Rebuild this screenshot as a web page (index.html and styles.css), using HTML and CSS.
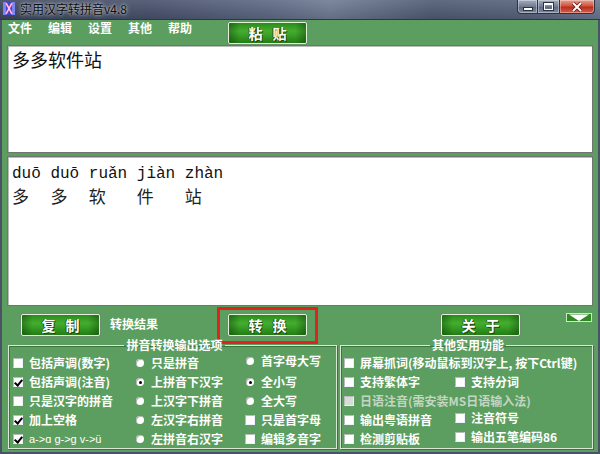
FILE: index.html
```html
<!DOCTYPE html>
<html lang="zh-CN">
<head>
<meta charset="utf-8">
<title>实用汉字转拼音v4.8</title>
<link rel="stylesheet" href="styles.css">
</head>
<body>
<div class="win">
  <header class="titlebar">
    <svg class="appicon" width="12" height="13" viewBox="0 0 12 13">
      <rect x="0" y="0" width="12" height="13" fill="#3a48c8"/>
      <rect x="0" y="0" width="3" height="13" fill="#7a86f0"/>
      <rect x="9" y="0" width="3" height="13" fill="#7a86f0"/>
      <path d="M3 1 L9 12 M9 1 L3 12" stroke="#ff6fc0" stroke-width="2"/>
      <path d="M3 1 L9 12 M9 1 L3 12" stroke="#fff" stroke-width="0.7"/>
    </svg>
    <span class="title">实用汉字转拼音v4.8</span>
    <div class="caps">
      <span class="cap cap-min"><svg width="10" height="4" viewBox="0 0 10 4"><rect x="0.5" y="0.5" width="9" height="3" fill="#fff" stroke="#2a3140" stroke-width="1"/></svg></span>
      <span class="cap cap-max"><svg width="11" height="9" viewBox="0 0 11 9"><rect x="0.5" y="0.5" width="10" height="8" fill="none" stroke="#2a3140" stroke-width="1"/><rect x="1.5" y="1.5" width="8" height="6" fill="none" stroke="#fff" stroke-width="1"/><rect x="1.5" y="1.5" width="8" height="1.6" fill="#fff"/></svg></span>
      <span class="cap cap-close"><svg width="12" height="10" viewBox="0 0 12 10"><path d="M2 1 L10 9 M10 1 L2 9" stroke="#5a1010" stroke-width="3.4"/><path d="M2 1 L10 9 M10 1 L2 9" stroke="#fff" stroke-width="2"/></svg></span>
    </div>
  </header>

  <main class="client">
    <div class="topbar">
      <nav class="menu">
        <span>文件</span><span>编辑</span><span>设置</span><span>其他</span><span>帮助</span>
      </nav>
      <button class="gbtn btn-paste">粘贴</button>
    </div>

    <div class="edit edit-src">多多软件站</div>

    <div class="edit edit-out">
      <div class="syls">
        <div class="syl w4"><span class="py">duō</span><span class="hz">多</span></div>
        <div class="syl w4"><span class="py">duō</span><span class="hz">多</span></div>
        <div class="syl w5"><span class="py">ruǎn</span><span class="hz">软</span></div>
        <div class="syl w5"><span class="py">jiàn</span><span class="hz">件</span></div>
        <div class="syl"><span class="py">zhàn</span><span class="hz">站</span></div>
      </div>
    </div>

    <div class="actions">
      <button class="gbtn btn-copy">复制</button>
      <span class="result-label">转换结果</span>
      <div class="highlight"><button class="gbtn btn-convert">转换</button></div>
      <button class="gbtn btn-about">关于</button>
      <span class="more"><svg width="26" height="9" viewBox="0 0 26 9"><rect x="0" y="0" width="26" height="9" fill="#2f8a22"/><rect x="0.5" y="0.5" width="25" height="8" fill="none" stroke="#cfe6c8"/><path d="M3 1.5 H23 L13 8 Z" fill="#fff"/></svg></span>
    </div>

    <div class="groups">
      <fieldset class="group group-left">
        <legend>拼音转换输出选项</legend>
        <div class="grid3">
          <label class="opt"><i class="cb"></i>包括声调(数字)</label>
          <label class="opt"><i class="rb"></i>只是拼音</label>
          <label class="opt up"><i class="rb"></i>首字母大写</label>

          <label class="opt"><i class="cb on"></i>包括声调(注音)</label>
          <label class="opt"><i class="rb on"></i>上拼音下汉字</label>
          <label class="opt"><i class="rb on"></i>全小写</label>

          <label class="opt"><i class="cb"></i>只是汉字的拼音</label>
          <label class="opt"><i class="rb"></i>上汉字下拼音</label>
          <label class="opt"><i class="rb"></i>全大写</label>

          <label class="opt"><i class="cb on"></i>加上空格</label>
          <label class="opt"><i class="rb"></i>左汉字右拼音</label>
          <label class="opt"><i class="cb"></i>只是首字母</label>

          <label class="opt"><i class="cb on"></i><span class="latin">a-&gt;ɑ ɡ-&gt;g v-&gt;ü</span></label>
          <label class="opt"><i class="rb"></i>左拼音右汉字</label>
          <label class="opt"><i class="cb"></i>编辑多音字</label>
        </div>
      </fieldset>

      <fieldset class="group group-right">
        <legend>其他实用功能</legend>
        <div class="grid2">
          <label class="opt span2"><i class="cb"></i>屏幕抓词(移动鼠标到汉字上, 按下Ctrl键)</label>
          <label class="opt"><i class="cb"></i>支持繁体字</label>
          <label class="opt"><i class="cb"></i>支持分词</label>
          <label class="opt span2 disabled"><i class="cb"></i>日语注音(需安装MS日语输入法)</label>
          <label class="opt"><i class="cb"></i>输出粤语拼音</label>
          <label class="opt up"><i class="cb"></i>注音符号</label>
          <label class="opt"><i class="cb"></i>检测剪贴板</label>
          <label class="opt up"><i class="cb"></i>输出五笔编码86</label>
        </div>
      </fieldset>
    </div>
  </main>
</div>
</body>
</html>
```

FILE: styles.css
```css
* { box-sizing: border-box; margin: 0; padding: 0; }

html, body {
  width: 600px;
  height: 454px;
  overflow: hidden;
  background: #fff;
}

body {
  font-family: "Noto Sans CJK SC", "Liberation Sans", sans-serif;
  font-size: 12px;
}

.win {
  width: 600px;
  height: 454px;
  display: flex;
  flex-direction: column;
}

/* ---------- title bar ---------- */
.titlebar {
  height: 20px;
  flex: none;
  display: flex;
  align-items: flex-start;
  padding-left: 3px;
  background:
    linear-gradient(180deg, rgba(255,255,255,0.10), rgba(0,0,0,0.10)),
    linear-gradient(90deg, #3c465d 0%, #46506a 25%, #5d6882 45%, #6f7a93 55%, #4e5972 72%, #56617a 88%, #6a7590 100%);
  border-bottom: 1px solid #2f3646;
}

.appicon { margin-top: 2px; flex: none; }

.title {
  margin-left: 5px;
  margin-top: 1px;
  font-size: 12px;
  line-height: 16px;
  color: #0c0c0c;
  text-shadow: 0 0 5px rgba(255,255,255,0.75), 0 0 2px rgba(255,255,255,0.6);
}

.caps {
  margin-left: auto;
  margin-right: 5px;
  display: flex;
  height: 14px;
}

.cap {
  height: 14px;
  display: flex;
  align-items: center;
  justify-content: center;
  border: 1px solid #2c3342;
  border-top: none;
  box-shadow: inset 0 0 0 1px rgba(255,255,255,0.35);
}

.cap-min {
  width: 21px;
  border-radius: 0 0 0 4px;
  background: linear-gradient(180deg, #a4adbf, #707b92 50%, #5b6780 51%, #7f8aa2);
}
.cap-min svg { margin-top: 5px; }

.cap-max {
  width: 22px;
  border-left: none;
  background: linear-gradient(180deg, #a4adbf, #707b92 50%, #5b6780 51%, #7f8aa2);
}

.cap-close {
  width: 35px;
  border-left: none;
  border-radius: 0 0 4px 0;
  background: linear-gradient(180deg, #e8a090, #d0553f 45%, #b92e1c 55%, #d4604a);
}

/* ---------- client area ---------- */
.client {
  flex: 1;
  display: flex;
  flex-direction: column;
  background: #5c9e60;
  border-left: 2px solid #4a5266;
  border-right: 2px solid #4a5266;
  border-bottom: 2px solid #4a5266;
  padding: 0 5px;
}

.topbar {
  height: 25px;
  flex: none;
  display: flex;
  align-items: flex-start;
}

.menu {
  display: flex;
  gap: 16px;
  padding-left: 1px;
  margin-top: 1px;
  font-size: 12px;
  line-height: 14px;
  font-weight: 700;
  color: #fff;
}

/* green buttons */
.gbtn {
  height: 22px;
  width: 79px;
  border: 1px solid #e2f0dc;
  border-radius: 2px;
  background:
    linear-gradient(90deg, rgba(0,40,0,0.35), rgba(0,0,0,0) 14%, rgba(0,0,0,0) 86%, rgba(0,40,0,0.35)),
    linear-gradient(180deg, #2c8a1c 0%, #44ad2e 40%, #3aa026 60%, #237c14 100%);
  box-shadow: 0 0 0 1px #6d8f6d;
  color: #fff;
  font-family: "Noto Sans CJK SC", sans-serif;
  font-size: 14px;
  font-weight: 700;
  line-height: 18px;
  letter-spacing: 10px;
  text-indent: 10px;
  text-shadow: 1px 1px 0 #1a4a10, -1px 0 0 #1a5a12;
  cursor: default;
}

.btn-paste { margin-left: 36px; margin-top: 2px; }

/* edit boxes */
.edit {
  flex: none;
  background: #fff;
  border: 1px solid #6f766f;
  box-shadow: inset 1px 1px 0 #b9bdb9;
}

.edit-src {
  height: 108px;
  padding: 2px 4px;
  font-size: 18px;
  line-height: 22px;
  color: #111;
}

.edit-out {
  margin-top: 3px;
  height: 150px;
  padding: 8px 4px;
}

.syls { display: flex; }
.syl { display: flex; flex-direction: column; }
.syl.w4 { width: 38.4px; }
.syl.w5 { width: 48px; }

.py {
  font-family: "Liberation Mono", "DejaVu Sans Mono", monospace;
  font-size: 16px;
  line-height: 18px;
  color: #111;
}

.hz {
  margin-top: 3px;
  font-size: 17px;
  line-height: 20px;
  color: #222;
}

/* action row */
.actions {
  height: 37px;
  flex: none;
  display: flex;
  align-items: flex-start;
}

.btn-copy { margin-left: 14px; margin-top: 8px; }

.result-label {
  margin-left: 10px;
  margin-top: 10px;
  color: #fff;
  font-weight: 700;
  font-size: 12px;
  line-height: 16px;
}

.highlight {
  margin-left: 59px;
  margin-top: 1px;
  border: 3px solid #e3221f;
  padding: 4px 8px 5px;
}

.btn-about { margin-left: 123px; margin-top: 8px; }

.more { margin-left: 46px; margin-top: 7px; display: flex; }

/* group boxes */
.groups {
  flex: 1;
  display: flex;
  gap: 3px;
  padding-left: 1px;
}

.group {
  border: 1px solid #d9e9d6;
  box-shadow: inset 1px 1px 0 #3f7442, 1px 1px 0 #3f7442;
  margin-top: -5px;
  height: 111px;
}

.group legend {
  margin: 0 auto;
  padding: 0 2px;
  color: #fff;
  font-weight: 700;
  font-size: 12px;
  line-height: 14px;
}

.group-left { width: 329px; padding: 1px 0 0 4px; }
.group-right { width: 253px; padding: 1px 0 0 3px; }

.grid3 {
  display: grid;
  grid-template-columns: 122px 110px 1fr;
  grid-auto-rows: 19px;
}

.grid2 {
  display: grid;
  grid-template-columns: 111px 1fr;
  grid-auto-rows: 19px;
}

.span2 { grid-column: span 2; }

.opt {
  display: flex;
  align-items: center;
  gap: 6px;
  color: #fff;
  font-weight: 700;
  font-size: 12px;
  line-height: 14px;
  white-space: nowrap;
}

.opt.up { margin-top: -3px; }

.opt.disabled { color: #c3d6c2; }
.opt.disabled .cb { background: #d8dcd8; }

.latin {
  font-family: "Liberation Sans", sans-serif;
  font-size: 11px;
  font-weight: 400;
}

.cb {
  position: relative;
  flex: none;
  width: 10px;
  height: 10px;
  background: #fff;
  border: 1px solid #b8bcb8;
  border-right-color: #eef;
  border-bottom-color: #eef;
}

.cb.on::after {
  content: "";
  position: absolute;
  left: 2px;
  top: 0px;
  width: 3px;
  height: 6px;
  border: solid #000;
  border-width: 0 2px 2px 0;
  transform: rotate(40deg);
}

.rb {
  position: relative;
  flex: none;
  width: 10px;
  height: 10px;
  display: flex;
  align-items: center;
  justify-content: center;
}

.rb::before {
  content: "";
  width: 8px;
  height: 8px;
  border-radius: 50%;
  background: #fff;
  box-shadow: inset 1px 1px 0 #b0b4b0;
}

.rb.on::after {
  content: "";
  position: absolute;
  left: 4px;
  top: 4px;
  width: 3px;
  height: 3px;
  border-radius: 50%;
  background: #000;
}
```
